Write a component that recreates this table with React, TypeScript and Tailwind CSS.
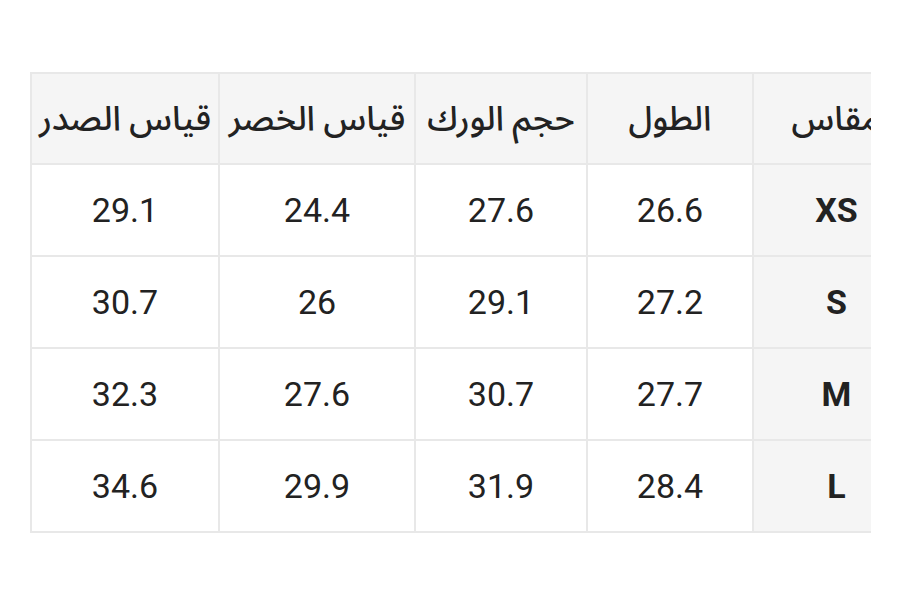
import React from "react";

const headers = ["المقاس", "الطول", "حجم الورك", "قياس الخصر", "قياس الصدر"];
const rows: [string, string, string, string, string][] = [
  ["XS", "26.6", "27.6", "24.4", "29.1"],
  ["S", "27.2", "29.1", "26", "30.7"],
  ["M", "27.7", "30.7", "27.6", "32.3"],
  ["L", "28.4", "31.9", "29.9", "34.6"],
];

export default function App() {
  return (
    <div className="w-[900px] h-[600px] bg-white pt-[72px] pl-[30px] font-['Roboto','Noto_Sans_Arabic','DejaVu_Sans',sans-serif] text-[#222]">
      <div className="w-[841px] overflow-hidden">
        <table dir="rtl" className="w-[891px] table-fixed border-collapse">
          <colgroup>
            <col className="w-[167px]" />
            <col className="w-[166px]" />
            <col className="w-[172px]" />
            <col className="w-[196px]" />
            <col className="w-[188px]" />
          </colgroup>
          <thead>
            <tr className="h-[91px] bg-[#f5f5f5]">
              {headers.map((h, i) => (
                <th
                  key={h}
                  className={
                    i === 0
                      ? "border-2 border-[#e8e8e8] text-center align-middle text-[34px] font-medium whitespace-nowrap pl-[18px]"
                      : "border-2 border-[#e8e8e8] text-center align-middle text-[34px] font-medium whitespace-nowrap"
                  }
                >
                  {h}
                </th>
              ))}
            </tr>
          </thead>
          <tbody>
            {rows.map((r) => (
              <tr key={r[0]} className="h-[92px]">
                {r.map((c, i) => (
                  <td
                    key={i}
                    className={
                      i === 0
                        ? "border-2 border-[#e8e8e8] bg-[#f5f5f5] text-center align-middle text-[34px] font-bold"
                        : "border-2 border-[#e8e8e8] bg-white text-center align-middle text-[34px]"
                    }
                  >
                    {c}
                  </td>
                ))}
              </tr>
            ))}
          </tbody>
        </table>
      </div>
    </div>
  );
}
